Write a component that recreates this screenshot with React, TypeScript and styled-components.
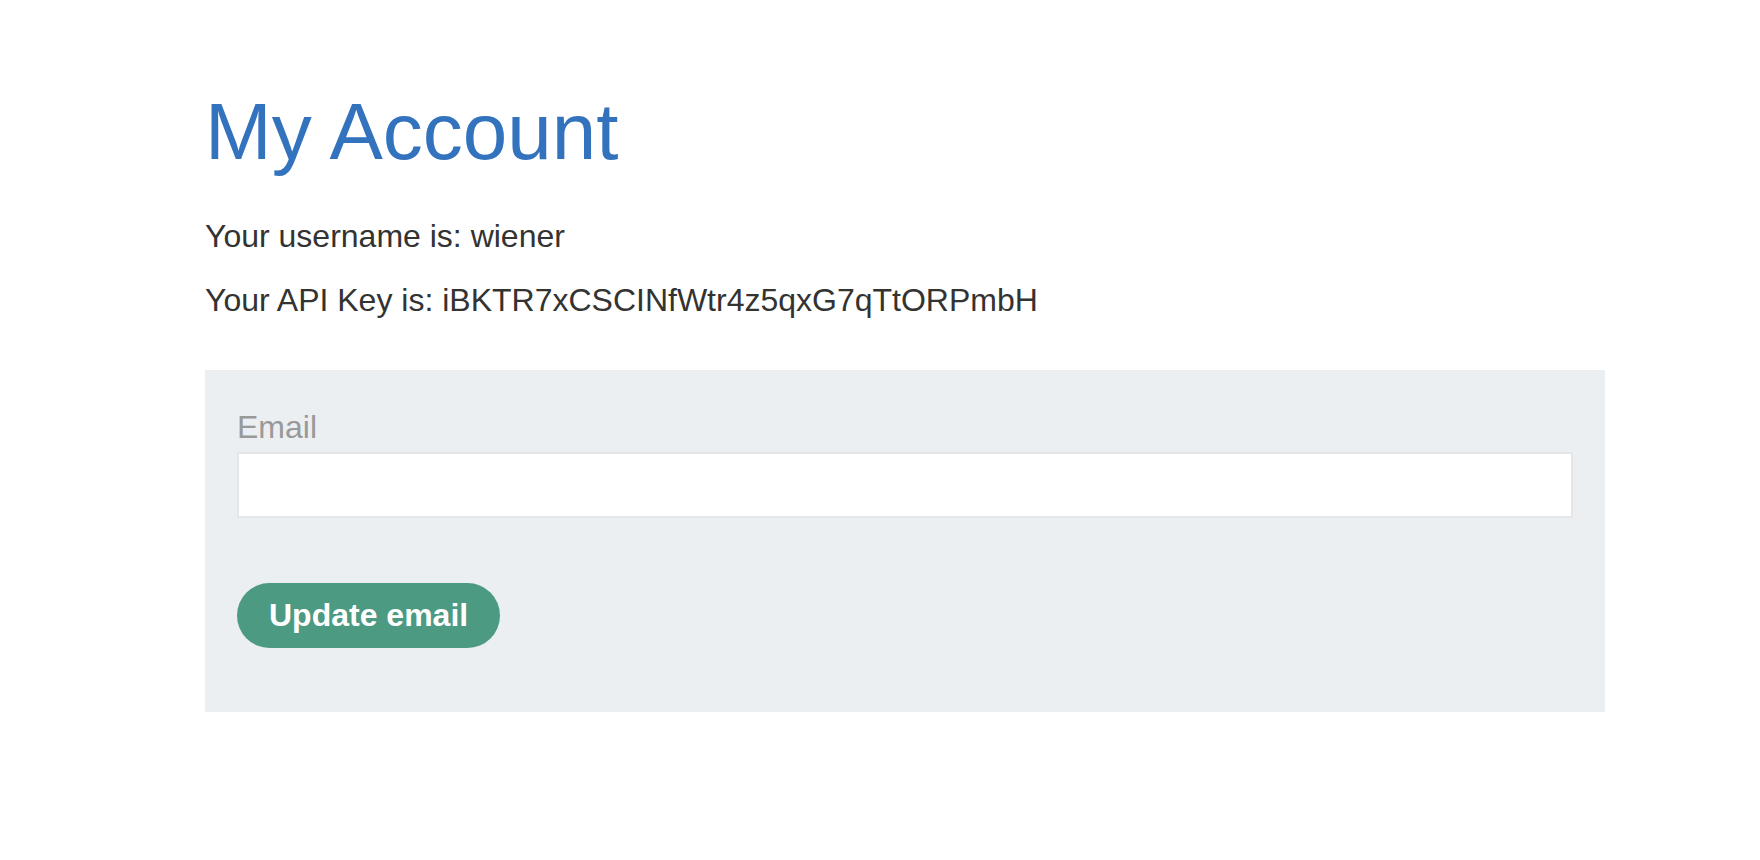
import React, { useState } from 'react'
import styled, { createGlobalStyle } from 'styled-components'

const GlobalStyle = createGlobalStyle`
  html, body {
    margin: 0;
    padding: 0;
    background: #ffffff;
  }
  body {
    font-family: 'Liberation Sans', Arial, sans-serif;
    color: #333332;
  }
`;

const Page = styled.main`
  padding: 84px 0 64px 205px;
`;

const Heading = styled.h1`
  margin: 0 0 36px;
  font-size: 80px;
  font-weight: 400;
  line-height: 96px;
  color: #3373be;
`;

const Info = styled.p`
  margin: 0 0 24px;
  font-size: 32px;
  line-height: 40px;
  color: #333332;
`;

const Panel = styled.form`
  width: 1400px;
  box-sizing: border-box;
  margin-top: 50px;
  padding: 37px 32px 64px;
  background: #ebeff2;
  display: flex;
  flex-direction: column;
  align-items: flex-start;
`;

const Label = styled.label`
  font-size: 32px;
  line-height: 40px;
  color: #999999;
  margin-bottom: 5px;
`;

const Field = styled.input`
  width: 100%;
  height: 66px;
  box-sizing: border-box;
  border: 2px solid #e4e6e8;
  background: #ffffff;
  font-family: inherit;
  font-size: 32px;
  padding: 0 16px;
  outline: none;
`;

const Button = styled.button`
  margin-top: 65px;
  height: 65px;
  padding: 0 32px;
  border: none;
  border-radius: 33px;
  background: #4c9a82;
  color: #ffffff;
  font-family: 'Liberation Sans', Arial, sans-serif;
  font-size: 32px;
  font-weight: 700;
  line-height: 65px;
  cursor: pointer;
`;

const App = (): JSX.Element => {
  const [email, setEmail] = useState<string>('');

  return (
    <>
      <GlobalStyle />
      <Page>
        <Heading>My Account</Heading>
        <Info>Your username is: wiener</Info>
        <Info>Your API Key is: iBKTR7xCSCINfWtr4z5qxG7qTtORPmbH</Info>
        <Panel onSubmit={(e) => e.preventDefault()}>
          <Label htmlFor="email">Email</Label>
          <Field id="email" type="email" value={email} onChange={(e) => setEmail(e.target.value)} />
          <Button type="submit">Update email</Button>
        </Panel>
      </Page>
    </>
  );
};

export default App;
